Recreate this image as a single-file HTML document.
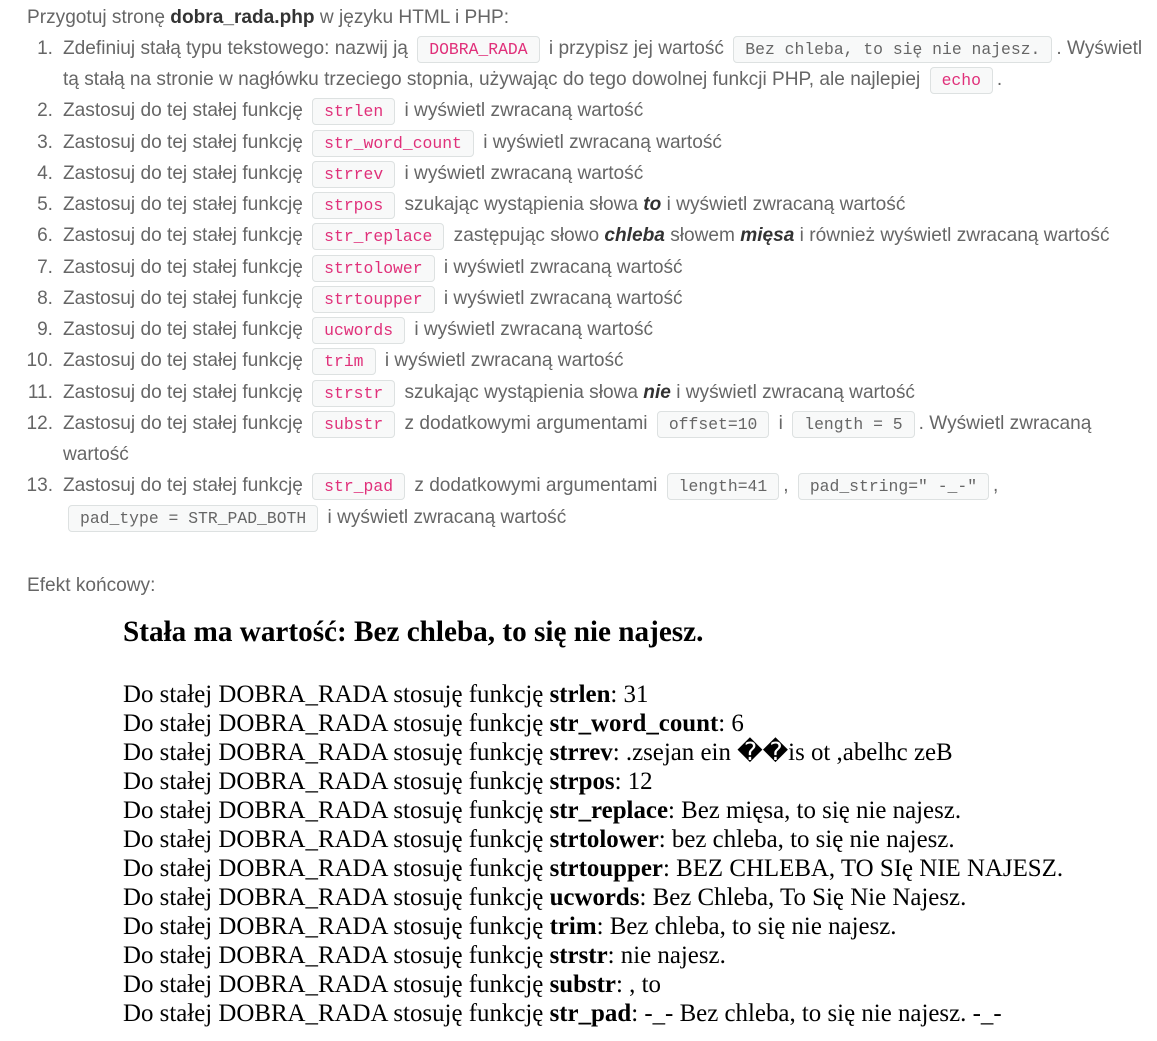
<!DOCTYPE html>
<html><head><meta charset="utf-8"><style>
body{margin:0;background:#fff;width:1157px;height:1041px;overflow:hidden;position:relative}
.t{font-family:"Liberation Sans",sans-serif;font-size:19.1px;color:#666;}
.l{position:absolute;white-space:nowrap;line-height:31px;height:31px}
.n{position:absolute;width:30px;text-align:right;left:23px}
code{font-family:"Liberation Mono",monospace;font-size:16.4px;color:#e0307a;background:#f8f9f9;border:1px solid #dde1e1;border-radius:4px;padding:3px 11px;margin:0 4px}
code.g{color:#666}
.t b{color:#333}
.s{font-family:"Liberation Serif",serif;color:#000;position:absolute;left:123px;white-space:nowrap;font-size:24.9px;line-height:29px}
</style></head><body>
<div class="t">
<div class="l" style="left:27px;top:2px">Przygotuj stronę <b>dobra_rada.php</b> w języku HTML i PHP:</div>
<div class="n l" style="top:33px">1.</div><div class="l" style="left:63px;top:33px">Zdefiniuj stałą typu tekstowego: nazwij ją <code>DOBRA_RADA</code> i przypisz jej wartość <code class="g">Bez chleba, to się nie najesz.</code>. Wyświetl</div>
<div class="l" style="left:63px;top:64px">tą stałą na stronie w nagłówku trzeciego stopnia, używając do tego dowolnej funkcji PHP, ale najlepiej <code>echo</code>.</div>
<div class="n l" style="top:95px">2.</div><div class="l" style="left:63px;top:95px">Zastosuj do tej stałej funkcję <code>strlen</code> i wyświetl zwracaną wartość</div>
<div class="n l" style="top:127px">3.</div><div class="l" style="left:63px;top:127px">Zastosuj do tej stałej funkcję <code>str_word_count</code> i wyświetl zwracaną wartość</div>
<div class="n l" style="top:158px">4.</div><div class="l" style="left:63px;top:158px">Zastosuj do tej stałej funkcję <code>strrev</code> i wyświetl zwracaną wartość</div>
<div class="n l" style="top:189px">5.</div><div class="l" style="left:63px;top:189px">Zastosuj do tej stałej funkcję <code>strpos</code> szukając wystąpienia słowa <b><i>to</i></b> i wyświetl zwracaną wartość</div>
<div class="n l" style="top:220px">6.</div><div class="l" style="left:63px;top:220px">Zastosuj do tej stałej funkcję <code>str_replace</code> zastępując słowo <b><i>chleba</i></b> słowem <b><i>mięsa</i></b> i również wyświetl zwracaną wartość</div>
<div class="n l" style="top:252px">7.</div><div class="l" style="left:63px;top:252px">Zastosuj do tej stałej funkcję <code>strtolower</code> i wyświetl zwracaną wartość</div>
<div class="n l" style="top:283px">8.</div><div class="l" style="left:63px;top:283px">Zastosuj do tej stałej funkcję <code>strtoupper</code> i wyświetl zwracaną wartość</div>
<div class="n l" style="top:314px">9.</div><div class="l" style="left:63px;top:314px">Zastosuj do tej stałej funkcję <code>ucwords</code> i wyświetl zwracaną wartość</div>
<div class="n l" style="top:345px">10.</div><div class="l" style="left:63px;top:345px">Zastosuj do tej stałej funkcję <code>trim</code> i wyświetl zwracaną wartość</div>
<div class="n l" style="top:377px">11.</div><div class="l" style="left:63px;top:377px">Zastosuj do tej stałej funkcję <code>strstr</code> szukając wystąpienia słowa <b><i>nie</i></b> i wyświetl zwracaną wartość</div>
<div class="n l" style="top:408px">12.</div><div class="l" style="left:63px;top:408px">Zastosuj do tej stałej funkcję <code>substr</code> z dodatkowymi argumentami <code class="g">offset=10</code> i <code class="g">length = 5</code>. Wyświetl zwracaną</div>
<div class="l" style="left:63px;top:439px">wartość</div>
<div class="n l" style="top:470px">13.</div><div class="l" style="left:63px;top:470px">Zastosuj do tej stałej funkcję <code>str_pad</code> z dodatkowymi argumentami <code class="g">length=41</code>, <code class="g">pad_string=" -_-"</code>,</div>
<div class="l" style="left:64px;top:502px"><code class="g">pad_type = STR_PAD_BOTH</code> i wyświetl zwracaną wartość</div>
<div class="l" style="left:27px;top:570px">Efekt końcowy:</div>
</div>
<div class="s" style="top:618px;font-weight:bold;font-size:29.2px">Stała ma wartość: Bez chleba, to się nie najesz.</div>
<div class="s" style="top:680px">Do stałej DOBRA_RADA stosuję funkcję <b>strlen</b>: 31<br>Do stałej DOBRA_RADA stosuję funkcję <b>str_word_count</b>: 6<br>Do stałej DOBRA_RADA stosuję funkcję <b>strrev</b>: .zsejan ein ��is ot ,abelhc zeB<br>Do stałej DOBRA_RADA stosuję funkcję <b>strpos</b>: 12<br>Do stałej DOBRA_RADA stosuję funkcję <b>str_replace</b>: Bez mięsa, to się nie najesz.<br>Do stałej DOBRA_RADA stosuję funkcję <b>strtolower</b>: bez chleba, to się nie najesz.<br>Do stałej DOBRA_RADA stosuję funkcję <b>strtoupper</b>: BEZ CHLEBA, TO SIę NIE NAJESZ.<br>Do stałej DOBRA_RADA stosuję funkcję <b>ucwords</b>: Bez Chleba, To Się Nie Najesz.<br>Do stałej DOBRA_RADA stosuję funkcję <b>trim</b>: Bez chleba, to się nie najesz.<br>Do stałej DOBRA_RADA stosuję funkcję <b>strstr</b>: nie najesz.<br>Do stałej DOBRA_RADA stosuję funkcję <b>substr</b>: , to<br>Do stałej DOBRA_RADA stosuję funkcję <b>str_pad</b>: -_- Bez chleba, to się nie najesz. -_-</div>
</body></html>
